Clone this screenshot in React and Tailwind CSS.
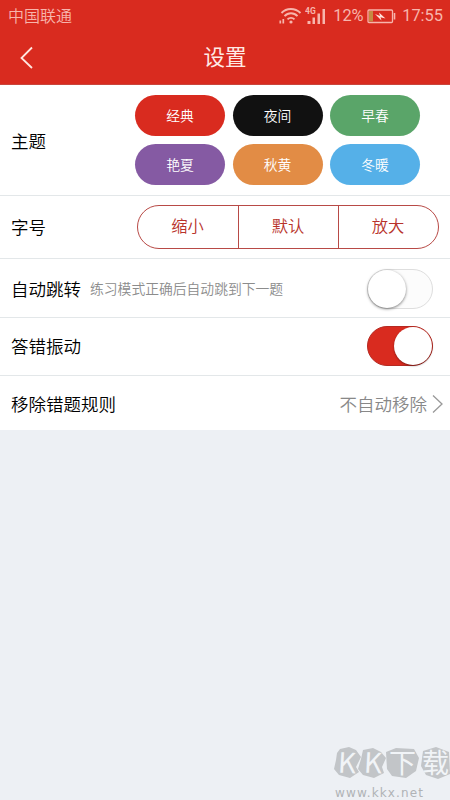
const themes = [
  { name: '经典', color: 'bg-[#d92b1f]' },
  { name: '夜间', color: 'bg-[#111111]' },
  { name: '早春', color: 'bg-[#5aa569]' },
  { name: '艳夏', color: 'bg-[#855aa3]' },
  { name: '秋黄', color: 'bg-[#e28c45]' },
  { name: '冬暖', color: 'bg-[#55b0e8]' },
];

const sizes = ['缩小', '默认', '放大'];

function StatusBar() {
  return (
    <div className="flex h-8 items-center justify-between pl-2 pr-[7px] text-[#f7b5ac]">
      <span className="-mt-0.5 text-[16px] leading-[30px]">中国联通</span>
      <div className="flex h-8 items-center font-['Roboto'] text-[16.400px] font-normal">
        <svg width="23" height="18" viewBox="0 0 23 18" fill="none" stroke="currentColor" strokeWidth="1.900">
          <path d="M2.500 6C7.500 .6 16 .6 21.500 6" />
          <path d="M5.500 9.200C9 5.200 15 5.200 18.500 9.200" />
          <path d="M8.500 12.400C10.500 10.300 13.500 10.300 15.500 12.400" />
          <circle cx="12" cy="15" r="1.600" fill="currentColor" stroke="none" />
          <path d="M1.300 13.500V16.500M4.300 12V16.500" strokeWidth="1.700" />
        </svg>
        <svg className="ml-[3px]" width="23" height="20" viewBox="0 0 23 20" fill="currentColor">
          <text x="0" y="7.500" fontSize="8.500" fontWeight="700" fontFamily="Roboto">4G</text>
          <rect x="2.500" y="15" width="3" height="3" />
          <rect x="7.500" y="11.500" width="2.500" height="6.500" />
          <rect x="12.500" y="7.500" width="2.500" height="10.500" />
          <rect x="17.500" y="3" width="2.500" height="15" />
        </svg>
        <span className="ml-[5px] w-[31px] whitespace-nowrap">12%</span>
        <svg className="ml-[3px]" width="29" height="15" viewBox="0 0 29 15" fill="none">
          <rect x="1" y="1" width="24.500" height="12.500" rx="1" stroke="currentColor" strokeWidth="1.300" />
          <rect x="2" y="2" width="4" height="10.500" fill="#c58a42" />
          <path d="M27.500 4V10.500" stroke="currentColor" strokeWidth="1.600" />
          <path d="M8 5L13 7L12 3.500L18.500 9.500L13.500 8.200L14.500 11.500Z" fill="#ffe3dc" />
        </svg>
        <span className="ml-1.5">17:55</span>
      </div>
    </div>
  );
}

function Header() {
  return (
    <header className="h-[85px] border-b border-[#c9463c] bg-[#d92b1f]">
      <StatusBar />
      <div className="grid h-[52px] grid-cols-3 items-center">
        <svg className="-mt-0.5 ml-[19px]" width="15" height="24" viewBox="0 0 15 24" fill="none" stroke="#ffe6df" strokeWidth="1.800">
          <path d="M13 2.500L2.500 13L13 23" />
        </svg>
        <h1 className="pb-1 text-center text-[21.500px] font-normal leading-[46px] text-[#ffeae5]">设置</h1>
      </div>
    </header>
  );
}

function Label({ children }) {
  return <span className="text-[17.500px] leading-6 text-black">{children}</span>;
}

function Toggle({ on }) {
  return on ? (
    <div className="flex h-10 w-[66px] justify-end rounded-full border border-[#b52a22] bg-[#d92b1f]">
      <div className="size-[38px] rounded-full bg-white shadow-[0_1px_2px_rgba(0,0,0,0.4)]" />
    </div>
  ) : (
    <div className="flex h-10 w-[66px] rounded-full border border-[#dedede] bg-[#fcfcfc]">
      <div className="size-[38px] rounded-full bg-white shadow-[0_1px_3px_rgba(0,0,0,0.5)]" />
    </div>
  );
}

function Watermark() {
  return (
    <svg className="absolute bottom-0 right-0" width="120" height="60" viewBox="0 0 120 60">
      <g fill="#c2c5c8">
        <path d="M7 13L10 9L19 7L26 10L31 17L26 27L29 32L20 38L9 35L4 29L6 20Z" />
        <path d="M33 10L43 8L51 12L56 18L52 27L54 33L44 38L33 35L28 29L31 19Z" />
        <path d="M56 12L66 8L84 9L89 18L86 31L76 38L62 36L57 29Z" />
        <path d="M93 11L106 7L119 12L120 34L108 39L96 35L91 26Z" />
      </g>
      <g fill="#f1f4f7" fontFamily="'Noto Sans CJK SC', sans-serif" fontWeight="400">
        <text x="8" y="33" fontSize="28" transform="rotate(3 16 23)">K</text>
        <text x="34" y="33" fontSize="28" transform="rotate(3 44 23)">K</text>
        <text x="59" y="33" fontSize="27">下</text>
        <text x="92" y="33" fontSize="27">载</text>
      </g>
      <text x="5" y="57" fontSize="12" fontWeight="400" fill="#b0b3b6" fontFamily="'DejaVu Sans', sans-serif" textLength="88">www.kkx.net</text>
    </svg>
  );
}

export default function App() {
  return (
    <div className="relative h-[800px] w-[450px] overflow-hidden bg-[#edf0f4] font-['Noto_Sans_CJK_SC',sans-serif] font-[350]">
      <Header />
      <main className="bg-white">
        <section className="flex h-[111px] items-center border-b border-[#e3e7e9] pl-[11px]">
          <div className="w-[124px] pt-0.5">
            <Label>主题</Label>
          </div>
          <div className="grid grid-cols-3 gap-x-[7.500px] gap-y-2">
            {themes.map((t) => (
              <button key={t.name} className={`h-[41px] w-[90px] rounded-full text-[13.800px] text-white ${t.color}`}>
                {t.name}
              </button>
            ))}
          </div>
        </section>
        <section className="flex h-[63px] items-center border-b border-[#e3e7e9] pl-[11px]">
          <div className="w-[126px]">
            <Label>字号</Label>
          </div>
          <div className="grid h-11 w-[302px] grid-cols-3 overflow-hidden rounded-full border border-[#b84a46]">
            {sizes.map((s) => (
              <button key={s} className="border-l border-[#b84a46] pb-1 pr-px text-[16.300px] text-[#b8332b] first:border-l-0">
                {s}
              </button>
            ))}
          </div>
        </section>
        <section className="flex h-[59px] items-center border-b border-[#e3e7e9] pl-[11px] pr-[17px] pt-px">
          <Label>自动跳转</Label>
          <span className="ml-[9px] flex-1 text-[13.800px] text-[#8c8c8c]">练习模式正确后自动跳到下一题</span>
          <Toggle />
        </section>
        <section className="flex h-[58px] items-center justify-between border-b border-[#e3e7e9] pb-px pl-[11px] pr-[17px]">
          <Label>答错振动</Label>
          <Toggle on />
        </section>
        <section className="flex h-[54px] items-center pl-[11px] pr-1.5 pt-px">
          <Label>移除错题规则</Label>
          <span className="ml-auto text-[17.500px] leading-6 text-[#888]">不自动移除</span>
          <svg className="ml-1" width="13" height="20" viewBox="0 0 13 20" fill="none" stroke="#999" strokeWidth="1.300">
            <path d="M2 1.500L11 10L2 18.500" />
          </svg>
        </section>
      </main>
      <Watermark />
    </div>
  );
}
